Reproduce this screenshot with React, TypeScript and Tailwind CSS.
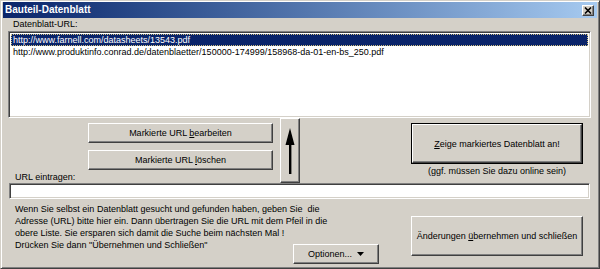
import React from "react";

const raised =
  "bg-[#d4d0c8] border border-t-white border-l-white border-r-[#404040] border-b-[#404040] shadow-[inset_-1px_-1px_0_#808080]";
const sunken =
  "bg-white border border-t-[#808080] border-l-[#808080] border-r-white border-b-white shadow-[inset_1px_1px_0_#404040,inset_-1px_-1px_0_#d4d0c8]";

const lines = [
  "Wenn Sie selbst ein Datenblatt gesucht und gefunden haben, geben Sie  die",
  "Adresse (URL) bitte hier ein. Dann übertragen Sie die URL mit dem Pfeil in die",
  "obere Liste. Sie ersparen sich damit die Suche beim nächsten Mal !",
  "Drücken Sie dann \"Übernehmen und Schließen\"",
];

export default function App() {
  const font = { fontFamily: '"Liberation Sans", Arial, sans-serif' };
  return (
    <div
      className="w-[600px] h-[269px] bg-[#d4d0c8] border border-t-[#d4d0c8] border-l-[#d4d0c8] border-r-[#404040] border-b-[#404040] shadow-[inset_1px_1px_0_#ffffff,inset_-1px_-1px_0_#808080] p-[1px] text-black text-[9px] leading-[12px] overflow-hidden"
      style={font}
    >
      {/* title bar */}
      <div className="h-[16px] mx-[1px] flex items-center bg-gradient-to-r from-[#0a246a] to-[#a6caf0] pl-[2px] pr-[3px]">
        <span className="text-white font-bold text-[10px] leading-[12px]">Bauteil-Datenblatt</span>
        <div className={`ml-auto w-[12px] h-[11px] flex items-center justify-center ${raised}`}>
          <svg width="8" height="7" viewBox="0 0 8 7">
            <path d="M1 0.5 L7 6.5 M7 0.5 L1 6.5" stroke="#000" strokeWidth="1.6" />
          </svg>
        </div>
      </div>

      {/* label */}
      <div className="h-[12px] pl-[11px]">Datenblatt-URL:</div>

      {/* list box */}
      <div className={`mt-[1px] ml-[6px] w-[583px] h-[87px] p-[2px] ${sunken}`}>
        <div className="h-[12px] bg-[#0a246a] text-white pl-[2px] outline outline-1 outline-dotted outline-[#d0c080] -outline-offset-1 whitespace-nowrap">
          http://www.farnell.com/datasheets/13543.pdf
        </div>
        <div className="h-[12px] pl-[2px] whitespace-nowrap">
          http://www.produktinfo.conrad.de/datenblaetter/150000-174999/158968-da-01-en-bs_250.pdf
        </div>
      </div>

      {/* middle row */}
      <div className="flex h-[65px]">
        <div className="w-[278px] flex flex-col">
          <button className={`mt-[5px] ml-[86px] w-[185px] h-[20px] ${raised} leading-[12px]`} style={font}>
            Markierte URL <span className="underline">b</span>earbeiten
          </button>
          <button className={`mt-[7px] ml-[86px] w-[185px] h-[20px] ${raised} leading-[12px]`} style={font}>
            Markierte URL <span className="underline">l</span>öschen
          </button>
          <div className="mt-auto pl-[13px] h-[12px]">URL eintragen:</div>
        </div>
        <div className={`w-[20px] h-[65px] flex items-center justify-center ${raised}`}>
          <svg width="10" height="46" viewBox="0 0 10 46">
            <polygon points="5,0 9.5,17 0.5,17" fill="#000" />
            <rect x="4" y="15" width="2.4" height="31" fill="#000" />
          </svg>
        </div>
        <div className="flex-1 flex flex-col">
          <div className="mt-[5px] ml-[111px] w-[172px] h-[41px] border border-black">
            <button className={`w-full h-full ${raised} leading-[12px]`} style={font}>
              <span className="underline">Z</span>eige markiertes Datenblatt an!
            </button>
          </div>
          <div className="ml-[111px] w-[172px] text-center mt-[1px]">(ggf. müssen Sie dazu online sein)</div>
        </div>
      </div>

      {/* input */}
      <div className={`ml-[7px] w-[581px] h-[16px] ${sunken}`}></div>

      {/* bottom row */}
      <div className="flex h-[66px]">
        <div className="w-[291px] pl-[13px] pt-[4px] flex flex-col items-start">
          {lines.map((l, i) => (
            <div key={i} className="whitespace-pre h-[12px]">
              {l}
            </div>
          ))}
        </div>
        <button
          className={`self-end mb-[1px] w-[86px] h-[20px] flex items-center justify-center gap-[5px] ${raised} leading-[12px]`}
          style={font}
        >
          <span>Optionen...</span>
          <svg width="7" height="4" viewBox="0 0 7 4">
            <polygon points="0,0 7,0 3.5,4" fill="#000" />
          </svg>
        </button>
        <button
          className={`mt-[17px] ml-[32px] w-[172px] h-[40px] ${raised} leading-[12px]`}
          style={font}
        >
          Änderungen <span className="underline">ü</span>bernehmen und schließen
        </button>
      </div>
    </div>
  );
}
